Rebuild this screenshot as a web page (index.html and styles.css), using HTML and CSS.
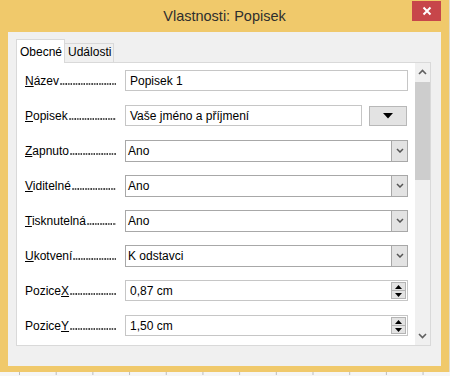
FILE: index.html
```html
<!DOCTYPE html>
<html lang="cs">
<head>
    <meta charset="UTF-8">
    <meta name="viewport" content="width=device-width, initial-scale=1.0">
    <title>Vlastnosti: Popisek</title>
    <link rel="stylesheet" href="styles.css">
</head>
<body>
    <div class="window">
        <div class="titlebar">
            <span class="title">Vlastnosti: Popisek</span>
            <div class="close">
                <svg width="10" height="10" viewBox="0 0 10 10"><path d="M1.5 1.5 L8.5 8.5 M8.5 1.5 L1.5 8.5" stroke="#fff" stroke-width="2"/></svg>
            </div>
        </div>

        <div class="content">
            <div class="tabs">
                <div class="tab active">Obecné</div>
                <div class="tab">Události</div>
            </div>

            <div class="panel">
                <div class="rows">
                    <div class="row">
                        <label class="label"><span><u>N</u>ázev</span><span class="dots"></span></label>
                        <div class="field text">Popisek 1</div>
                    </div>
                    <div class="row">
                        <label class="label"><span><u>P</u>opisek</span><span class="dots"></span></label>
                        <div class="field text short">Vaše jméno a příjmení</div>
                        <div class="drop-btn">
                            <svg width="10" height="6" viewBox="0 0 10 6"><path d="M0 0 H10 L5 5.5 Z" fill="#000"/></svg>
                        </div>
                    </div>
                    <div class="row">
                        <label class="label"><span><u>Z</u>apnuto</span><span class="dots"></span></label>
                        <div class="field select"><span class="value">Ano</span><span class="arrow"><svg width="8" height="5" viewBox="0 0 8 5"><path d="M1 1 L4 4 L7 1" stroke="#555" stroke-width="1.5" fill="none"/></svg></span></div>
                    </div>
                    <div class="row">
                        <label class="label"><span><u>V</u>iditelné</span><span class="dots"></span></label>
                        <div class="field select"><span class="value">Ano</span><span class="arrow"><svg width="8" height="5" viewBox="0 0 8 5"><path d="M1 1 L4 4 L7 1" stroke="#555" stroke-width="1.5" fill="none"/></svg></span></div>
                    </div>
                    <div class="row">
                        <label class="label"><span><u>T</u>isknutelná</span><span class="dots"></span></label>
                        <div class="field select"><span class="value">Ano</span><span class="arrow"><svg width="8" height="5" viewBox="0 0 8 5"><path d="M1 1 L4 4 L7 1" stroke="#555" stroke-width="1.5" fill="none"/></svg></span></div>
                    </div>
                    <div class="row">
                        <label class="label"><span><u>U</u>kotvení</span><span class="dots"></span></label>
                        <div class="field select"><span class="value">K odstavci</span><span class="arrow"><svg width="8" height="5" viewBox="0 0 8 5"><path d="M1 1 L4 4 L7 1" stroke="#555" stroke-width="1.5" fill="none"/></svg></span></div>
                    </div>
                    <div class="row">
                        <label class="label"><span>Pozice<u>X</u></span><span class="dots"></span></label>
                        <div class="field spin"><span class="value">0,87 cm</span>
                            <span class="spin-btns">
                                <span class="spin-btn"><svg width="7" height="4" viewBox="0 0 7 4"><path d="M0 4 H7 L3.5 0 Z" fill="#000"/></svg></span>
                                <span class="spin-btn"><svg width="7" height="4" viewBox="0 0 7 4"><path d="M0 0 H7 L3.5 4 Z" fill="#000"/></svg></span>
                            </span>
                        </div>
                    </div>
                    <div class="row">
                        <label class="label"><span>Pozice<u>Y</u></span><span class="dots"></span></label>
                        <div class="field spin"><span class="value">1,50 cm</span>
                            <span class="spin-btns">
                                <span class="spin-btn"><svg width="7" height="4" viewBox="0 0 7 4"><path d="M0 4 H7 L3.5 0 Z" fill="#000"/></svg></span>
                                <span class="spin-btn"><svg width="7" height="4" viewBox="0 0 7 4"><path d="M0 0 H7 L3.5 4 Z" fill="#000"/></svg></span>
                            </span>
                        </div>
                    </div>
                </div>

                <div class="scrollbar">
                    <div class="sb-arrow"><svg width="9" height="6" viewBox="0 0 9 6"><path d="M1 5 L4.5 1.5 L8 5" stroke="#606060" stroke-width="1.6" fill="none"/></svg></div>
                    <div class="sb-track"><div class="sb-thumb"></div></div>
                    <div class="sb-arrow"><svg width="9" height="6" viewBox="0 0 9 6"><path d="M1 1 L4.5 4.5 L8 1" stroke="#606060" stroke-width="1.6" fill="none"/></svg></div>
                </div>
            </div>
        </div>
    </div>
    <div class="ruler"></div>
</body>
</html>
```

FILE: styles.css
```css
:root {
    --frame-color: #f0c96b;
    --dialog-bg: #f0f0f0;
    --panel-border: #d9d9d9;
    --field-border: #c6c6c6;
    --select-border: #a8a8a8;
    --button-bg: #e3e3e3;
    --text-color: #000000;
}

* {
    margin: 0;
    padding: 0;
    box-sizing: border-box;
}

body {
    background-color: #f4f4f4;
    font-family: "Liberation Sans", Arial, sans-serif;
    font-size: 12px;
    color: var(--text-color);
    width: 450px;
    height: 376px;
    overflow: hidden;
}

.window {
    width: 450px;
    height: 372px;
    background-color: var(--frame-color);
    padding: 0 8px 6px 8px;
    border-right: 1px solid #e0dccf;
    display: flex;
    flex-direction: column;
}

.titlebar {
    height: 32px;
    position: relative;
    display: flex;
    align-items: center;
    justify-content: center;
    flex-shrink: 0;
}

.titlebar .title {
    font-size: 14.5px;
    color: #2e2e2e;
    margin-top: -1px;
}

.close {
    position: absolute;
    top: 1px;
    right: 0;
    width: 29px;
    height: 20px;
    background-color: #c7464a;
    display: flex;
    align-items: center;
    justify-content: center;
}

.content {
    flex: 1;
    background-color: var(--dialog-bg);
    padding: 7px 10px 20px 8px;
    display: flex;
    flex-direction: column;
}

.tabs {
    display: flex;
    align-items: flex-end;
    height: 23px;
    flex-shrink: 0;
}

.tab {
    border: 1px solid var(--panel-border);
    border-bottom: none;
    padding: 0 2px 0 3px;
    height: 19px;
    line-height: 17px;
    background-color: var(--dialog-bg);
}

.tab + .tab {
    border-left: none;
}

.tab.active {
    height: 24px;
    margin-bottom: -1px;
    background-color: #ffffff;
    line-height: 22px;
    padding-top: 1px;
    position: relative;
    z-index: 1;
}

.panel {
    flex: 1;
    width: 415px;
    border: 1px solid var(--panel-border);
    background-color: #ffffff;
    display: flex;
}

.rows {
    flex: 1;
    padding: 7px 0 0 8px;
    display: flex;
    flex-direction: column;
    gap: 14px;
    overflow: hidden;
}

.row {
    display: flex;
    align-items: center;
    height: 21px;
}

/* label text followed by a dotted leader up to the field */
.label {
    width: 91px;
    margin-right: 9px;
    display: flex;
    align-items: baseline;
    white-space: nowrap;
}

.label .dots {
    flex: 1;
    height: 2px;
    margin-left: 1px;
    background-image: radial-gradient(circle at 1px 1px, #3a3a3a 0.65px, transparent 0.95px);
    background-size: 2.6px 2px;
}

.field {
    height: 21px;
    width: 283px;
    border: 1px solid var(--field-border);
    background-color: #ffffff;
    display: flex;
    align-items: center;
    padding-left: 4px;
}

.field.short {
    width: 237px;
}

.drop-btn {
    width: 38px;
    height: 20px;
    margin-left: 7px;
    background-color: var(--button-bg);
    border: 1px solid #b8b8b8;
    display: flex;
    align-items: center;
    justify-content: center;
}

.field.select {
    border-color: var(--select-border);
    padding-left: 2px;
    height: 22px;
}

.field .value {
    flex: 1;
}

.field.select .arrow {
    width: 16px;
    height: 100%;
    background-color: var(--button-bg);
    border-left: 1px solid var(--select-border);
    display: flex;
    align-items: center;
    justify-content: center;
}

.field.spin {
    padding-right: 1px;
}

.spin-btns {
    width: 15px;
    height: 17px;
    display: flex;
    flex-direction: column;
    border: 1px solid #b4b4b4;
}

.spin-btn {
    flex: 1;
    background-color: var(--button-bg);
    display: flex;
    align-items: center;
    justify-content: center;
}

.spin-btn + .spin-btn {
    border-top: 1px solid #b4b4b4;
}

.scrollbar {
    width: 15px;
    background-color: #f0f0f0;
    display: flex;
    flex-direction: column;
}

.sb-arrow {
    height: 18px;
    display: flex;
    align-items: center;
    justify-content: center;
}

.sb-track {
    flex: 1;
    padding-top: 1px;
}

.sb-thumb {
    height: 98px;
    background-color: #cdcdcd;
}

.ruler {
    height: 4px;
    background-color: #f6f6f6;
    background-image: linear-gradient(to right, #bdbdbd 1px, transparent 1px);
    background-size: 36.7px 3px;
    background-repeat: repeat-x;
    background-position: 19px 0;
}
```
